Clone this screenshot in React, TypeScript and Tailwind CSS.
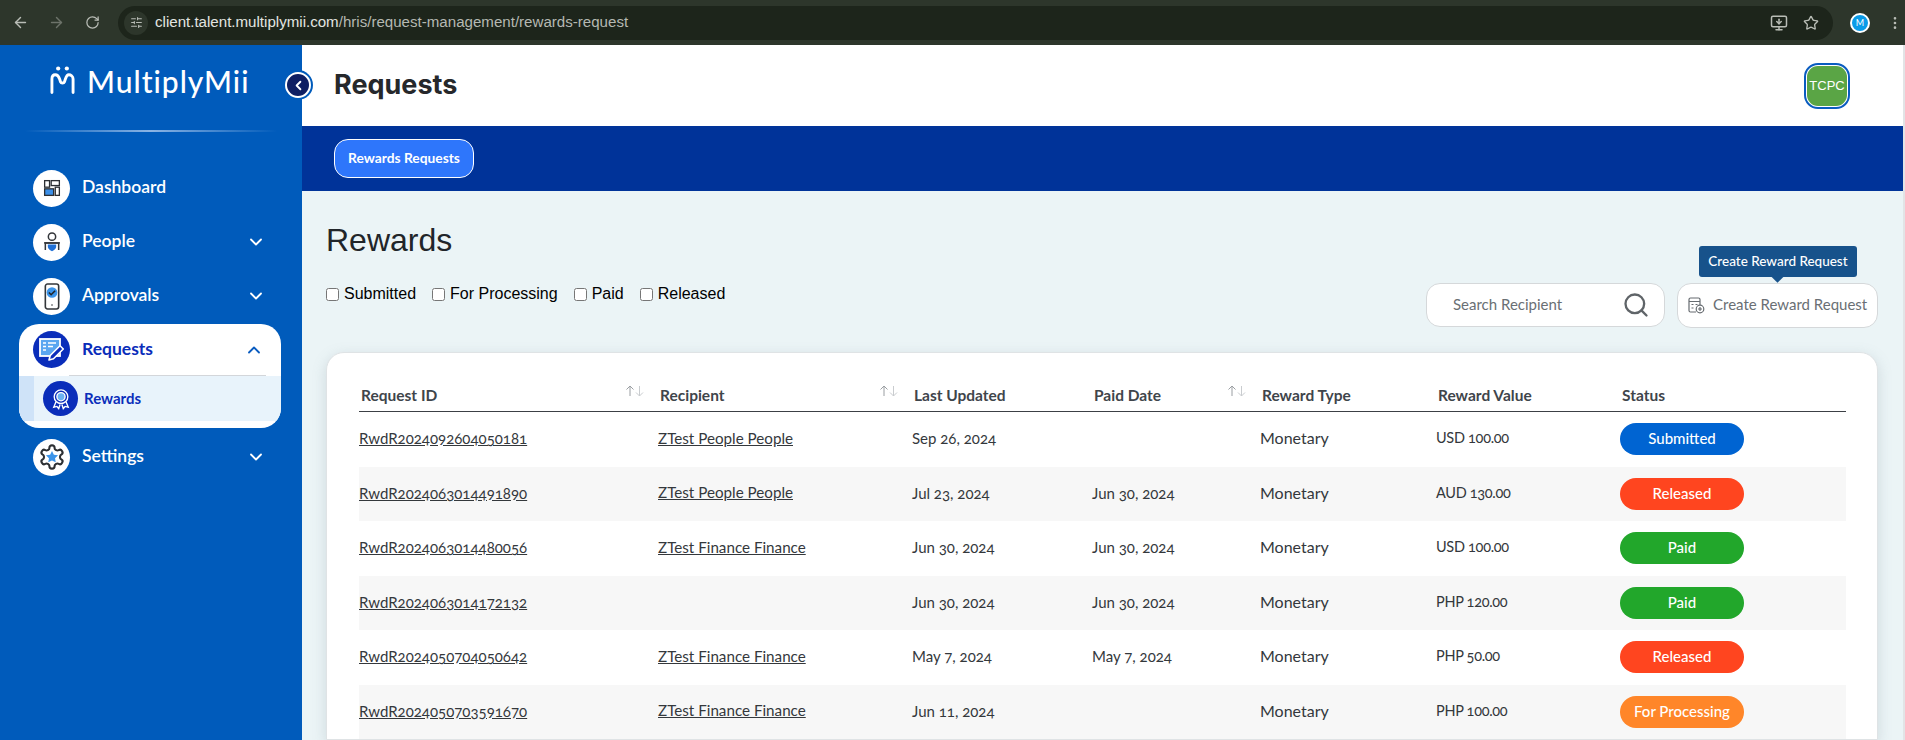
import React from 'react';
import { ArrowLeft, ArrowRight, RotateCw, SlidersHorizontal, Star, MoreVertical, MonitorDown, ChevronLeft, ChevronDown, ChevronUp, Search } from 'lucide-react';

const ROWS = [
  { id: 'RwdR2024092604050181', recipient: 'ZTest People People', updated: 'Sep 26, 2024', paid: '', value: 'USD 100.00', status: 'Submitted' },
  { id: 'RwdR2024063014491890', recipient: 'ZTest People People', updated: 'Jul 23, 2024', paid: 'Jun 30, 2024', value: 'AUD 130.00', status: 'Released' },
  { id: 'RwdR2024063014480056', recipient: 'ZTest Finance Finance', updated: 'Jun 30, 2024', paid: 'Jun 30, 2024', value: 'USD 100.00', status: 'Paid' },
  { id: 'RwdR2024063014172132', recipient: '', updated: 'Jun 30, 2024', paid: 'Jun 30, 2024', value: 'PHP 120.00', status: 'Paid' },
  { id: 'RwdR2024050704050642', recipient: 'ZTest Finance Finance', updated: 'May 7, 2024', paid: 'May 7, 2024', value: 'PHP 50.00', status: 'Released' },
  { id: 'RwdR2024050703591670', recipient: 'ZTest Finance Finance', updated: 'Jun 11, 2024', paid: '', value: 'PHP 100.00', status: 'For Processing' },
];

const STATUS_COLORS: Record<string, string> = {
  Submitted: 'bg-[#0064d2]',
  Released: 'bg-[#ff451f]',
  Paid: 'bg-[#22a72b]',
  'For Processing': 'bg-[#ff8629]',
};

const GRID = 'grid grid-cols-[299px_254px_180px_168px_176px_184px_1fr] items-center';

const LogoMark = () => (
  <svg width="25" height="32" viewBox="0 0 26 32" fill="none" stroke="white" strokeWidth="3" strokeLinecap="round">
    <circle cx="8.5" cy="3" r="2.2" fill="white" stroke="none" />
    <circle cx="17.5" cy="3" r="2.2" fill="white" stroke="none" />
    <path d="M2 28V14c0-3 1.5-4.5 3.5-4.5S9 11 10 14l1 3c.6 1.5 3.4 1.5 4 0l1-3c1-3 1.500-4.500 3.500-4.500S24 11 24 14v14" />
  </svg>
);

const DashboardIcon = () => (
  <svg width="18" height="18" viewBox="0 0 22 22" fill="none" stroke="#2c2f33" strokeWidth="1.6">
    <rect x="2" y="2" width="6" height="8" />
    <rect x="10" y="2" width="10" height="6" />
    <rect x="2" y="12" width="11" height="8" fill="#3b8fe8" />
    <rect x="15" y="10" width="5" height="10" />
  </svg>
);

const PeopleIcon = () => (
  <svg width="20" height="23" viewBox="0 0 24 26" fill="none" stroke="#33363a" strokeWidth="1.8">
    <circle cx="12" cy="6" r="4.400" />
    <path d="M4 22v-8.500h16V22" />
    <path d="M2.500 13.500h19" />
    <path d="M7 15.500h10v3c0 2-3 4-5 5-2-1-5-3-5-5z" fill="#1f6fd6" stroke="none" />
  </svg>
);

const ApprovalsIcon = () => (
  <svg width="16" height="29" viewBox="0 0 18 31" fill="none">
    <rect x="1.500" y="1.500" width="15" height="28" rx="2.500" stroke="#33363a" strokeWidth="1.800" />
    <circle cx="9" cy="11" r="6" fill="#3b94ea" />
    <path d="M5.500 11l2.500 2.500 4.500-4.500" stroke="#1f2226" strokeWidth="1.800" />
    <circle cx="9" cy="25" r="0.900" fill="#33363a" />
  </svg>
);

const RequestsIcon = () => (
  <svg width="27" height="27" viewBox="0 0 27 27" fill="none">
    <rect x="2" y="3" width="20" height="17" fill="#5aa6f0" stroke="white" strokeWidth="1.800" />
    <path d="M5 7h3M5 10.500h3M5 14h3M10 7h8M10 10.500h5" stroke="white" strokeWidth="1.500" />
    <path d="M11 24l1.200-4.500L22 9.700l3.300 3.300-9.800 9.800z" fill="#0a2dba" stroke="white" strokeWidth="1.600" strokeLinejoin="round" />
  </svg>
);

const RewardsIcon = () => (
  <svg width="20" height="22" viewBox="0 0 22 24" fill="none" stroke="white" strokeWidth="1.500">
    <circle cx="11" cy="9.500" r="7.500" />
    <circle cx="11" cy="9.500" r="4.500" fill="#6cb2f2" />
    <path d="M5.500 15l-2.500 6 3.500-.8 2 2.300 1.500-4.500M16.500 15l2.500 6-3.500-.8-2 2.300-1.500-4.500" />
  </svg>
);

const SettingsIcon = () => (
  <svg width="28" height="28" viewBox="0 0 24 24" fill="none" stroke="#2c2f33" strokeWidth="1.800">
    <path d="M12.220 2h-.44a2 2 0 0 0-2 2v.18a2 2 0 0 1-1 1.730l-.43.250a2 2 0 0 1-2 0l-.15-.08a2 2 0 0 0-2.730.730l-.22.380a2 2 0 0 0 .730 2.730l.15.100a2 2 0 0 1 1 1.720v.510a2 2 0 0 1-1 1.740l-.15.090a2 2 0 0 0-.730 2.730l.22.380a2 2 0 0 0 2.730.730l.15-.08a2 2 0 0 1 2 0l.43.250a2 2 0 0 1 1 1.730V20a2 2 0 0 0 2 2h.44a2 2 0 0 0 2-2v-.18a2 2 0 0 1 1-1.730l.43-.25a2 2 0 0 1 2 0l.15.080a2 2 0 0 0 2.730-.730l.22-.390a2 2 0 0 0-.730-2.730l-.15-.08a2 2 0 0 1-1-1.740v-.5a2 2 0 0 1 1-1.740l.15-.09a2 2 0 0 0 .730-2.730l-.22-.38a2 2 0 0 0-2.730-.730l-.15.080a2 2 0 0 1-2 0l-.43-.25a2 2 0 0 1-1-1.730V4a2 2 0 0 0-2-2z" />
    <path d="M12 6.800l1.600 3.200 3.600.5-2.600 2.500.6 3.600-3.200-1.700-3.200 1.700.6-3.600-2.600-2.500 3.600-.5z" fill="#3b94ea" stroke="none" />
  </svg>
);

const CreateIcon = () => (
  <svg width="17" height="17" viewBox="0 0 17 17" fill="none" stroke="#666b70" strokeWidth="1.200">
    <path d="M8 15H2.500A1.500 1.500 0 0 1 1 13.500v-11A1.500 1.500 0 0 1 2.500 1h8A1.500 1.500 0 0 1 12 2.500V8" />
    <path d="M1 4.500h11M3.500 7.500h2M3.500 11h2M7.500 7.500h2" />
    <circle cx="12" cy="12" r="3.800" />
    <path d="M12 10v4M10 12h4" />
  </svg>
);

const NavItem = ({ icon, label, chevron }: { icon: React.ReactNode; label: string; chevron?: boolean }) => (
  <div className="flex h-[54px] items-center pl-[33px] pr-[36px]">
    <div className="flex h-[37px] w-[37px] items-center justify-center rounded-full bg-white">{icon}</div>
    <span className="mb-px ml-[12px] text-[17.500px] font-semibold text-white">{label}</span>
    {chevron && <ChevronDown size={20} strokeWidth={2.200} className="ml-auto text-white" />}
  </div>
);

const SortArrows = () => (
  <span className="mb-[10px] flex">
    <svg width="20" height="12" viewBox="0 0 20 12" fill="none" strokeWidth="1">
      <path d="M5 11V1M1.500 4.500L5 1l3.500 3.500" stroke="#9a9ea2" />
      <path d="M14.500 1v10M11 7.500l3.500 3.500L18 7.500" stroke="#c9cccf" />
    </svg>
  </span>
);

const HeaderCell = ({ label, sort }: { label: string; sort?: boolean }) => (
  <div className="flex items-center justify-between pl-[2px] pr-[13px] text-[15.500px] font-bold text-[#3f454b]">
    <span>{label}</span>
    {sort && <SortArrows />}
  </div>
);

const FILTERS = ['Submitted', 'For Processing', 'Paid', 'Released'];

export default function App() {
  return (
    <div className="flex h-[740px] w-[1905px] flex-col overflow-hidden bg-[#ebf4f6] font-['Lato',sans-serif]">
      {/* browser bar */}
      <div className="flex h-[45px] shrink-0 items-center bg-[#2d362b] text-[#b9bdb6]">
        <div className="flex w-[118px] items-center justify-around pl-[2px] pr-[8px]">
          <ArrowLeft size={17} />
          <ArrowRight size={17} className="text-[#6d736a]" />
          <RotateCw size={15} />
        </div>
        <div className="flex h-[34px] w-[1715px] items-center rounded-full bg-[#1d251b] pl-[6px] pr-[14px]">
          <div className="flex h-[24px] w-[24px] items-center justify-center rounded-full bg-[#2d362b]">
            <SlidersHorizontal size={13} />
          </div>
          <span className="ml-[7px] font-['Liberation_Sans',sans-serif] text-[15.100px] text-[#e3e5e1]">
            client.talent.multiplymii.com<span className="text-[#b5b9b2]">/hris/request-management/rewards-request</span>
          </span>
          <MonitorDown size={18} className="ml-auto" />
          <Star size={16} className="ml-[15px]" />
        </div>
        <div className="ml-[17px] flex h-[20px] w-[20px] items-center justify-center rounded-full border-2 border-white bg-[#0a9be8] text-[9px] text-white">M</div>
        <MoreVertical size={16} className="ml-[17px]" />
      </div>

      <div className="flex min-h-0 flex-1">
        {/* sidebar */}
        <aside className="relative w-[302px] shrink-0 bg-[#005bbb]">
          <div className="flex items-center pl-[50px] pt-[18px] text-white">
            <LogoMark />
            <span className="ml-[12px] text-[30px] font-medium leading-[36px] tracking-[1px]">MultiplyMii</span>
          </div>
          <div className="mx-[25px] mt-[31px] h-[2px] bg-gradient-to-r from-transparent via-[#8bb4e4] to-transparent" />
          <nav className="mt-[29px]">
            <NavItem icon={<DashboardIcon />} label="Dashboard" />
            <NavItem icon={<PeopleIcon />} label="People" chevron />
            <NavItem icon={<ApprovalsIcon />} label="Approvals" chevron />
            <div className="ml-[19px] mr-[21px] mt-px overflow-hidden rounded-[20px] bg-white pb-[7px]">
              <div className="flex h-[51px] items-center pl-[14px] pr-[17px]">
                <div className="flex h-[37px] w-[37px] items-center justify-center rounded-full bg-[#0a2dba]">
                  <RequestsIcon />
                </div>
                <span className="ml-[12px] text-[17.500px] font-bold text-[#0a2dba]">Requests</span>
                <ChevronUp size={20} strokeWidth={2.200} className="ml-auto text-[#0a5cc0]" />
              </div>
              <div className="ml-[50px] mr-[15px] h-px bg-[#d3d6da]" />
              <div className="flex h-[45px] items-center border-l-[15px] border-[#cfe3f8] bg-[#e8f3fb] pl-[9px]">
                <div className="flex h-[35px] w-[35px] items-center justify-center rounded-full bg-[#0a2dba]">
                  <RewardsIcon />
                </div>
                <span className="ml-[6px] text-[15px] font-bold text-[#0a2dba]">Rewards</span>
              </div>
            </div>
            <div className="mt-[2px]">
              <NavItem icon={<SettingsIcon />} label="Settings" chevron />
            </div>
          </nav>
          {/* collapse toggle sits on the sidebar edge */}
          <div className="absolute left-[285px] top-[27px] flex h-[26px] w-[26px] items-center justify-center rounded-full border-2 border-white bg-[#0f1f63] ring-2 ring-[#005bbb]">
            <ChevronLeft size={15} strokeWidth={3} className="text-white" />
          </div>
        </aside>

        <main className="flex min-w-0 flex-1 flex-col border-r-2 border-[#e2e4e6]">
          <header className="flex h-[81px] shrink-0 items-center justify-between bg-white pl-[32px] pr-[53px]">
            <h1 className="font-['Inter',sans-serif] text-[27px] font-bold text-[#26282b]">Requests</h1>
            <div className="flex h-[46px] w-[46px] items-center justify-center rounded-[14px] border-2 border-[#0a5cc0] p-[1px]">
              <div className="flex h-full w-full items-center justify-center rounded-[11px] bg-[#5aa545] font-['Liberation_Sans',sans-serif] text-[13px] text-white">TCPC</div>
            </div>
          </header>
          <div className="flex h-[65px] shrink-0 items-center bg-[#003399] pl-[32px]">
            <button className="h-[39px] w-[140px] rounded-[14px] border border-white bg-[#2e76fb] text-[13.800px] font-bold text-white">Rewards Requests</button>
          </div>

          <div className="min-h-0 flex-1 pl-[24px] pr-[25px] pt-[30px]">
            <div className="flex items-start justify-between">
              <div>
                <h2 className="font-['Liberation_Sans',sans-serif] text-[32px] leading-[38px] text-[#212529]">Rewards</h2>
                <div className="mt-[23px] flex h-[24px] items-center gap-[16px] font-['Liberation_Sans',sans-serif] text-[16px] text-black">
                  {FILTERS.map((f) => (
                    <label key={f} className="flex items-center">
                      <input type="checkbox" className="mr-[5px] h-[13px] w-[13px]" />
                      {f}
                    </label>
                  ))}
                </div>
              </div>
              <div className="flex items-start gap-[12px] pt-[62px]">
                <div className="flex h-[44px] w-[239px] items-center justify-between rounded-[14px] border border-[#d5d8da] bg-white pl-[26px] pr-[14px] text-[15px] text-[#6a6f74]">
                  <span className="mb-[2px]">Search Recipient</span>
                  <Search size={28} strokeWidth={2} className="text-[#5f6468]" />
                </div>
                <div className="relative flex h-[45px] w-[201px] items-center rounded-[14px] border border-[#d5d8da] bg-white pl-[10px] text-[15px] text-[#6a6f74]">
                  <CreateIcon />
                  <span className="mb-[2px] ml-[8px]">Create Reward Request</span>
                  <div className="absolute -top-[38px] left-[21px] flex h-[31px] w-[158px] items-center justify-center rounded-[3px] bg-[#17528b] text-[13.500px] font-medium text-white">
                    Create Reward Request
                    <span className="absolute -bottom-[4px] left-[74px] h-[9px] w-[9px] rotate-45 bg-[#17528b]" />
                  </div>
                </div>
              </div>
            </div>

            <div className="mt-[24px] rounded-t-[18px] border border-[#dfe3e5] bg-white pl-[32px] pr-[31px] pt-[27px] shadow-[0_4px_14px_rgba(120,140,150,0.25)]">
              <div className={`${GRID} h-[32px] border-b border-[#3c4045]`}>
                <HeaderCell label="Request ID" sort />
                <HeaderCell label="Recipient" sort />
                <HeaderCell label="Last Updated" />
                <HeaderCell label="Paid Date" sort />
                <HeaderCell label="Reward Type" />
                <HeaderCell label="Reward Value" />
                <HeaderCell label="Status" />
              </div>
              {ROWS.map((r, i) => (
                <div key={r.id} className={`${GRID} h-[54.500px] text-[15px] text-[#34383c] oldstyle-nums ${i % 2 === 1 ? 'bg-[#f7f7f7]' : 'bg-white'}`}>
                  <span className="mb-[2px] underline">{r.id}</span>
                  <span className="mb-[2px] text-[15.200px] underline">{r.recipient}</span>
                  <span className="mb-[2px]">{r.updated}</span>
                  <span className="mb-[2px]">{r.paid}</span>
                  <span className="mb-[2px] text-[16px]">Monetary</span>
                  <span className="mb-[2px] text-[14.500px] tracking-[-0.3px]">{r.value}</span>
                  <span className={`flex h-[32px] w-[124px] items-center justify-center rounded-full pb-[2px] text-[15px] font-medium text-white ${STATUS_COLORS[r.status]}`}>{r.status}</span>
                </div>
              ))}
            </div>
          </div>
        </main>
      </div>
    </div>
  );
}
